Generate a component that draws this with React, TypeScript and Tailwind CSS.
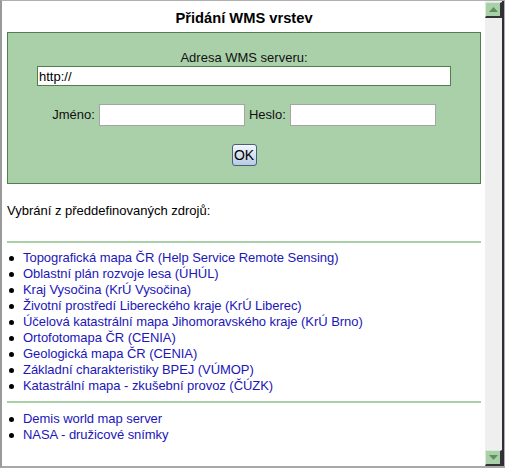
import React from 'react';

const SOURCES = [
  'Topografická mapa ČR (Help Service Remote Sensing)',
  'Oblastní plán rozvoje lesa (ÚHÚL)',
  'Kraj Vysočina (KrÚ Vysočina)',
  'Životní prostředí Libereckého kraje (KrÚ Liberec)',
  'Účelová katastrální mapa Jihomoravského kraje (KrÚ Brno)',
  'Ortofotomapa ČR (CENIA)',
  'Geologická mapa ČR (CENIA)',
  'Základní charakteristiky BPEJ (VÚMOP)',
  'Katastrální mapa - zkušební provoz (ČÚZK)',
];

const WORLD = ['Demis world map server', 'NASA - družicové snímky'];

const SourceList = ({ items }: { items: string[] }) => (
  <ul className="flex flex-col">
    {items.map((name) => (
      <li key={name} className="flex items-center h-4 leading-4">
        <span className="w-[5px] h-[5px] rounded-full bg-black ml-[2px] mr-[9px] shrink-0" />
        <a href="#" className="text-[#2116b8] whitespace-nowrap tracking-[-0.05px]">{name}</a>
      </li>
    ))}
  </ul>
);

const ScrollButton = ({ down }: { down?: boolean }) => (
  <div className="w-[17px] h-[16px] bg-[#aad0aa] border-t border-l border-t-[#d9ecd9] border-l-[#d9ecd9] border-r-2 border-b-2 border-r-[#333] border-b-[#333] flex items-center justify-center">
    <svg width="9" height="5" viewBox="0 0 9 5">
      {down ? (
        <polygon points="0,0 9,0 4.5,5" fill="#5f8f5f" />
      ) : (
        <polygon points="0,5 9,5 4.5,0" fill="#5f8f5f" />
      )}
    </svg>
  </div>
);

export default function App() {
  return (
    <div
      className="w-[505px] h-[468px] flex bg-white border-l-2 border-l-[#9a9a9a] border-t border-t-[#b0b0b0] border-b-2 border-b-[#a8a8a8] overflow-hidden text-[13px] text-black"
      style={{ fontFamily: '"Liberation Sans", Arial, sans-serif' }}
    >
      <div className="flex-1 pl-[5px] pr-[4px] pt-[9px] overflow-hidden">
        <h1 className="text-center font-bold text-[14.7px] leading-4 h-4 mb-[6px]">Přidání WMS vrstev</h1>

        <div className="border border-[#4f7f4f] bg-[#aad0aa] h-[152px] pt-[17px] flex flex-col items-center">
          <div className="leading-4 h-4 text-[#111]">Adresa WMS serveru:</div>
          <input
            defaultValue="http://"
            className="w-[414px] h-[20px] bg-white border border-[#4f7f4f] px-[1px] outline-none leading-4"
          />
          <div className="flex items-center gap-[4px] mt-[18px] text-[#111]">
            <label>Jméno:</label>
            <input className="w-[146px] h-[22px] bg-white border border-[#a5a5a5] outline-none" />
            <label>Heslo:</label>
            <input className="w-[146px] h-[22px] bg-white border border-[#a5a5a5] outline-none" />
          </div>
          <button className="mt-[18px] w-[25px] h-[22px] rounded-[3px] border border-[#4a5f80] bg-gradient-to-b from-[#f4f8fc] to-[#b8cbe4] text-[14px] leading-4 text-black">
            OK
          </button>
        </div>

        <p className="mt-[19px] leading-4 h-4">Vybrání z předdefinovaných zdrojů:</p>

        <hr className="mt-[22px] border-0 h-[2px] bg-[#aad0aa]" />
        <div className="mt-[7px]">
          <SourceList items={SOURCES} />
        </div>
        <hr className="mt-[7px] border-0 h-[2px] bg-[#aad0aa]" />
        <div className="mt-[8px]">
          <SourceList items={WORLD} />
        </div>
      </div>

      <div className="w-[17px] bg-[#efefef] flex flex-col justify-between pt-[1px]">
        <ScrollButton />
        <ScrollButton down />
      </div>
      <div className="w-[2px] bg-[#2e2e3a]" />
      <div className="w-[1px] bg-[#b0b0b0]" />
    </div>
  );
}
